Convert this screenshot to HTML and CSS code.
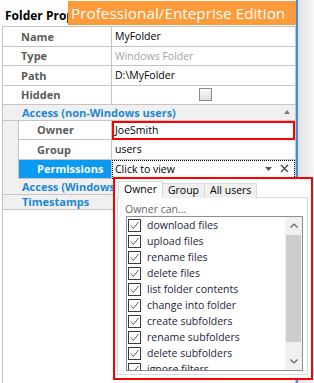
FILE: index.html
```html
<!DOCTYPE html>
<html>
  <head>
    <meta charset="UTF-8">
    <title>Folder Properties</title>
    <link rel="stylesheet" href="styles.css">
  </head>
  <body>
    <div class="window">
      <div class="panel">
        <div class="title">Folder Properties</div>
        <div class="grid">
          <div class="row"><span class="label">Name</span><span class="val">MyFolder</span></div>
          <div class="row"><span class="label">Type</span><span class="val dim">Windows Folder</span></div>
          <div class="row"><span class="label">Path</span><span class="val">D:\MyFolder</span></div>
          <div class="row"><span class="label">Hidden</span><span class="val center"><span class="box"></span></span></div>
          <div class="cat">Access (non-Windows users)<span class="collapse"></span></div>
          <div class="row sub"><span class="label">Owner</span><span class="val marked">JoeSmith</span></div>
          <div class="row sub"><span class="label">Group</span><span class="val">users</span></div>
          <div class="row sub">
            <span class="label selected">Permissions</span>
            <span class="val focus">Click to view
              <svg class="drop" width="7" height="4" viewBox="0 0 7 4"><path d="M0 0h7L3.5 4z" fill="#5a5a5a"/></svg>
              <svg class="clear" width="9" height="9" viewBox="0 0 9 9"><path d="M1 1l7 7M8 1L1 8" stroke="#444" stroke-width="1.3"/></svg>
            </span>
          </div>
          <div class="cat">Access (Windows users)</div>
          <div class="cat">Timestamps</div>
        </div>
      </div>
      <div class="gutter"></div>

      <div class="banner">Professional/Enteprise Edition</div>

      <div class="popup">
        <div class="tabs">
          <span class="tab active">Owner</span>
          <span class="tab">Group</span>
          <span class="tab">All users</span>
        </div>
        <div class="tabpanel">
          <div class="caption">Owner can...</div>
          <div class="listbox">
            <div class="items">
              <div class="item"><span class="check"></span>download files</div>
              <div class="item"><span class="check"></span>upload files</div>
              <div class="item"><span class="check"></span>rename files</div>
              <div class="item"><span class="check"></span>delete files</div>
              <div class="item"><span class="check"></span>list folder contents</div>
              <div class="item"><span class="check"></span>change into folder</div>
              <div class="item"><span class="check"></span>create subfolders</div>
              <div class="item"><span class="check"></span>rename subfolders</div>
              <div class="item"><span class="check"></span>delete subfolders</div>
              <div class="item"><span class="check"></span>ignore filters</div>
            </div>
            <div class="scrollbar">
              <span class="sbtn"><svg width="8" height="5" viewBox="0 0 8 5"><path d="M0.5 4.5L4 1l3.5 3.5" fill="none" stroke="#606060" stroke-width="1.2"/></svg></span>
              <span class="thumb"></span>
              <span class="track"></span>
              <span class="sbtn"><svg width="8" height="5" viewBox="0 0 8 5"><path d="M0.5 0.5L4 4l3.5-3.5" fill="none" stroke="#606060" stroke-width="1.2"/></svg></span>
            </div>
          </div>
        </div>
      </div>
    </div>
  </body>
</html>
```

FILE: styles.css
```css
* { margin: 0; padding: 0; box-sizing: border-box; }
body { font-family: "Open Sans", sans-serif; font-size: 10.5px; color: #000; background: #fff; }

.window { position: relative; display: flex; width: 314px; height: 383px; overflow: hidden; }
.panel { width: 296px; display: flex; flex-direction: column; }
.title { height: 26px; padding: 0 0 2px 5px; display: flex; align-items: flex-end; font-size: 12px; font-weight: bold; white-space: nowrap; }
.grid { flex: 1; margin-left: 2px; border: 1px solid #c4c4c4; border-bottom: none; }
.gutter { flex: 1; border-left: 2px solid #3f8ee0; background: linear-gradient(to right, #e2e2e2, #f7f7f7); }

/* property rows */
.row { display: flex; height: 19.5px; }
.row > span { display: flex; align-items: center; border-bottom: 1px solid #c4c4c4; white-space: nowrap; }
.label { width: 109px; padding-left: 18px; border-right: 1px solid #c4c4c4; font-size: 11px; font-weight: bold; color: #5b5b5b; }
.val { flex: 1; padding-left: 3px; }
.val.dim { color: #a3a3a3; }
.val.center { justify-content: center; }
.sub { padding-left: 15px; background: #f0f0f0; }
.sub .label { width: 94px; border-left: 1px solid #c4c4c4; background: #fff; }
.sub .val { background: #fff; }
.label.selected { background: #0a9af2; color: #fff; }
.val.marked { outline: 2px solid #f00; outline-offset: -2px; }
.val.focus { outline: 1px dotted #000; outline-offset: -1px; padding-right: 6px; }
.drop { margin-left: auto; margin-right: 8px; }

.box { width: 13px; height: 13px; border: 1px solid #8a8a8a; background: linear-gradient(#fbfbfb, #dedede); }

.cat { height: 15.5px; padding: 0 5px 0 19px; display: flex; align-items: center; justify-content: space-between; background: #f0f0f0; border-bottom: 1px solid #c4c4c4; color: #1b87d6; font-size: 11px; font-weight: bold; }
.collapse { width: 0; height: 0; border: 3.5px solid transparent; border-bottom: 4px solid #7a7a7a; border-top: none; }

/* overlays */
.banner { position: absolute; left: 68px; top: 1px; width: 228px; height: 24px; padding-left: 3px; background: #fd9a3a; color: #fff; font-size: 15.3px; line-height: 24px; white-space: nowrap; }

.popup { position: absolute; left: 113px; top: 177px; width: 200px; height: 203px; border: 2px solid #f00; background: #fff; padding: 2px 3px 3px 2px; display: flex; flex-direction: column; }
.tabs { display: flex; align-items: flex-end; height: 17px; padding-left: 1px; margin-bottom: -1px; position: relative; }
.tab { height: 15px; padding: 0 5px; border: 1px solid #d9d9d9; border-bottom: none; background: #f0f0f0; line-height: 13px; }
.tab + .tab { border-left: none; }
.tab.active { height: 17px; background: #fff; line-height: 15px; }
.tabpanel { flex: 1; border: 1px solid #d9d9d9; padding: 5px 0 0 7px; }
.caption { height: 13px; line-height: 13px; color: #666; }
.listbox { display: flex; width: 177px; height: 155px; margin-left: 1px; border: 1px solid #8c8f96; }
.items { flex: 1; overflow: hidden; }
.item { height: 16px; display: flex; align-items: center; padding-left: 1px; color: #1e1e3c; white-space: nowrap; }
.check { width: 13px; height: 13px; margin-right: 6px; border: 1px solid #3a3a3a; background: #fff url("data:image/svg+xml,%3Csvg xmlns='http://www.w3.org/2000/svg' width='11' height='11'%3E%3Cpath d='M1.5 5.5l2.8 3L9.5 2' fill='none' stroke='%23555' stroke-width='1'/%3E%3C/svg%3E") no-repeat center; }
.scrollbar { width: 17px; display: flex; flex-direction: column; background: #f0f0f0; }
.sbtn { height: 17px; display: flex; align-items: center; justify-content: center; }
.thumb { height: 107px; margin: 1px 1px 0; background: #cdcdcd; }
.track { flex: 1; }
```
